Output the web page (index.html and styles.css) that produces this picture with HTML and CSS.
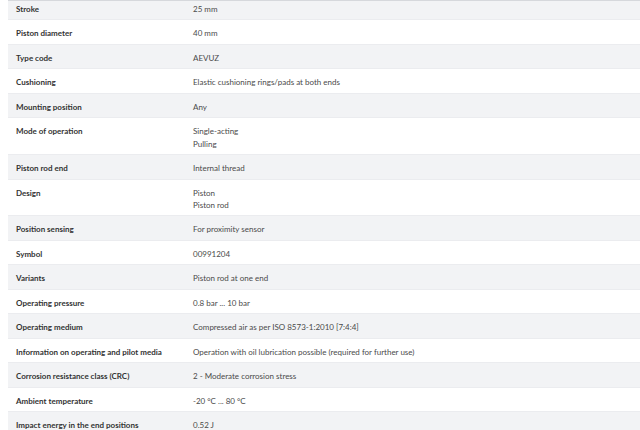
FILE: index.html
```html
<!DOCTYPE html>
<html lang="en">
<head>
<meta charset="utf-8">
<title>Technical data</title>
<link rel="stylesheet" href="styles.css">
</head>
<body>
<div class="specs">
  <table class="spec-table">
    <tbody>
      <tr><th>Stroke</th><td>25 mm</td></tr>
      <tr><th>Piston diameter</th><td>40 mm</td></tr>
      <tr><th>Type code</th><td>AEVUZ</td></tr>
      <tr><th>Cushioning</th><td>Elastic cushioning rings/pads at both ends</td></tr>
      <tr><th>Mounting position</th><td>Any</td></tr>
      <tr><th>Mode of operation</th><td>Single-acting<br>Pulling</td></tr>
      <tr><th>Piston rod end</th><td>Internal thread</td></tr>
      <tr><th>Design</th><td>Piston<br>Piston rod</td></tr>
      <tr><th>Position sensing</th><td>For proximity sensor</td></tr>
      <tr><th>Symbol</th><td>00991204</td></tr>
      <tr><th>Variants</th><td>Piston rod at one end</td></tr>
      <tr><th>Operating pressure</th><td>0.8 bar ... 10 bar</td></tr>
      <tr><th>Operating medium</th><td>Compressed air as per ISO 8573-1:2010 [7:4:4]</td></tr>
      <tr><th>Information on operating and pilot media</th><td>Operation with oil lubrication possible (required for further use)</td></tr>
      <tr><th>Corrosion resistance class (CRC)</th><td>2 - Moderate corrosion stress</td></tr>
      <tr><th>Ambient temperature</th><td>-20 °C ... 80 °C</td></tr>
      <tr><th>Impact energy in the end positions</th><td>0.52 J</td></tr>
    </tbody>
  </table>
</div>
</body>
</html>
```
FILE: styles.css
```css
html, body {
  margin: 0;
  padding: 0;
  background: #ffffff;
}
body {
  padding-left: 8px;
  font-family: Lato, "Open Sans", Arial, sans-serif;
  font-size: 8px;
  color: #4a4a4a;
  overflow: hidden;
}
.specs {
  border-top: 1px solid #d6d8dc;
  overflow: hidden;
}
.spec-table {
  width: 632px;
  margin-top: -5px;
  border-collapse: collapse;
}
.spec-table tr:nth-child(odd) {
  background: #f2f3f5;
}
.spec-table tr {
  border-bottom: 1px solid #ebecef;
}
.spec-table th,
.spec-table td {
  text-align: left;
  vertical-align: top;
  line-height: 12.3px;
  padding: 7px 8px 4.2px 8px;
}
.spec-table th {
  width: 161px;
  font-weight: bold;
  color: #333;
}
.spec-table td {
  color: #4a4a4a;
}
```
